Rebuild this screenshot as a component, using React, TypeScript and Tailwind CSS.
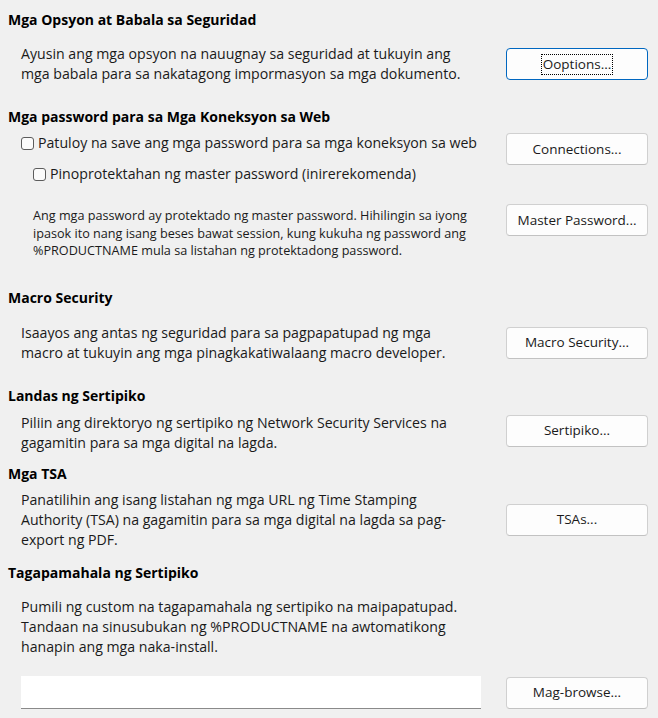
import type { ReactNode } from "react"

const font = { fontFamily: '"Open Sans", "Noto Sans", sans-serif' }

function Btn({ children, focused = false, className = "" }: { children: ReactNode; focused?: boolean; className?: string }) {
  return (
    <button
      className={`flex h-8 w-[142px] shrink-0 items-center justify-center rounded-[4px] border bg-[#fdfdfd] text-[13.5px] text-[#1a1a1a] ${
        focused ? "border-[#0067c0]" : "border-[#d0d0d0] border-b-[#c2c2c2]"
      } ${className}`}
    >
      {focused ? <span className="border border-dotted border-black px-[1px] leading-[19px]">{children}</span> : children}
    </button>
  )
}

function Heading({ children, className = "" }: { children: ReactNode; className?: string }) {
  return <h2 className={`text-[14px] font-bold leading-5 text-black ${className}`}>{children}</h2>
}

function Check({ label, className = "" }: { label: string; className?: string }) {
  return (
    <label className={`flex items-center gap-[4px] leading-5 ${className}`}>
      <span className="h-[13px] w-[13px] rounded-[3px] border border-[#5c5c5c] bg-[#fbfbfb]" />
      <span>{label}</span>
    </label>
  )
}

export default function App() {
  return (
    <div
      style={font}
      className="h-[718px] w-[658px] overflow-hidden bg-[#f0f0f0] pl-2 pr-[10px] text-[14.15px] text-[#1a1a1a]"
    >
      <Heading className="pt-[10px]">Mga Opsyon at Babala sa Seguridad</Heading>
      <div className="mt-[14px] flex items-center justify-between">
        <p className="pl-[13px] leading-5">
          Ayusin ang mga opsyon na nauugnay sa seguridad at tukuyin ang
          <br />
          mga babala para sa nakatagong impormasyon sa mga dokumento.
        </p>
        <Btn focused>Ooptions...</Btn>
      </div>

      <Heading className="mt-[23px]">Mga password para sa Mga Koneksyon sa Web</Heading>
      <div className="mt-[6px] flex items-start justify-between">
        <div>
          <Check label="Patuloy na save ang mga password para sa mga koneksyon sa web" className="pl-[13px]" />
          <Check label="Pinoprotektahan ng master password (inirerekomenda)" className="mt-[11px] pl-[25px]" />
        </div>
        <Btn>Connections...</Btn>
      </div>
      <div className="mt-[20px] flex items-start justify-between">
        <p className="mt-[3px] pl-[25px] text-[12.65px] leading-[17.5px]">
          Ang mga password ay protektado ng master password. Hihilingin sa iyong
          <br />
          ipasok ito nang isang beses bawat session, kung kukuha ng password ang
          <br />
          %PRODUCTNAME mula sa listahan ng protektadong password.
        </p>
        <Btn>Master Password...</Btn>
      </div>

      <Heading className="mt-[28px]">Macro Security</Heading>
      <div className="mt-[15px] flex items-center justify-between">
        <p className="pl-[13px] leading-5">
          Isaayos ang antas ng seguridad para sa pagpapatupad ng mga
          <br />
          macro at tukuyin ang mga pinagkakatiwalaang macro developer.
        </p>
        <Btn>Macro Security...</Btn>
      </div>

      <Heading className="mt-[23px]">Landas ng Sertipiko</Heading>
      <div className="mt-[7px] flex items-start justify-between">
        <p className="pl-[13px] leading-5">
          Piliin ang direktoryo ng sertipiko ng Network Security Services na
          <br />
          gagamitin para sa mga digital na lagda.
        </p>
        <Btn className="mt-[2px]">Sertipiko...</Btn>
      </div>

      <Heading className="mt-[11px]">Mga TSA</Heading>
      <div className="mt-[6px] flex items-center justify-between">
        <p className="pl-[13px] leading-5">
          Panatilihin ang isang listahan ng mga URL ng Time Stamping
          <br />
          Authority (TSA) na gagamitin para sa mga digital na lagda sa pag-
          <br />
          export ng PDF.
        </p>
        <Btn>TSAs...</Btn>
      </div>

      <Heading className="mt-[13px]">Tagapamahala ng Sertipiko</Heading>
      <p className="mt-[14px] pl-[13px] leading-5">
        Pumili ng custom na tagapamahala ng sertipiko na maipapatupad.
        <br />
        Tandaan na sinusubukan ng %PRODUCTNAME na awtomatikong
        <br />
        hanapin ang mga naka-install.
      </p>
      <div className="mt-[19px] flex items-start justify-between pl-[13px]">
        <input
          type="text"
          className="h-[33px] w-[460px] border-b border-[#8a8a8a] bg-white px-2 outline-none"
        />
        <Btn className="mt-[1px]">Mag-browse...</Btn>
      </div>
    </div>
  )
}
